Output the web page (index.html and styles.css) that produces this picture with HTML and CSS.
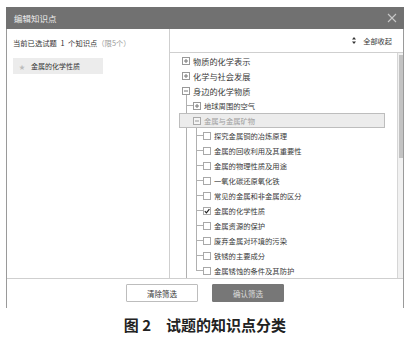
FILE: index.html
```html
<!DOCTYPE html>
<html lang="zh-CN">
<head>
    <meta charset="UTF-8">
    <title>编辑知识点</title>
    <link rel="stylesheet" href="styles.css">
</head>
<body>
    <div class="dialog">
        <div class="dlg-head">
            <span class="dlg-title">编辑知识点</span>
            <svg class="close" width="10" height="10" viewBox="0 0 10 10">
                <path d="M1 1L9 9M9 1L1 9" stroke="#c8c8c8" stroke-width="1.1" fill="none"/>
            </svg>
        </div>
        <div class="dlg-body">
            <div class="left">
                <p class="picked">当前已选试题 <b>1</b> 个知识点<span class="limit">（限5个）</span></p>
                <div class="tag"><span class="star">★</span>金属的化学性质</div>
            </div>
            <div class="right">
                <div class="toolbar">
                    <svg class="sort" width="4" height="7" viewBox="0 0 4 7">
                        <path d="M2 0L4 2.6H0Z M2 7L4 4.4H0Z" fill="#333"/>
                    </svg>
                    全部收起
                </div>
                <div class="tree-wrap">
                    <ul class="tree">
                        <li class="top">
                            <svg class="tgl" width="8" height="8" viewBox="0 0 8 8"><rect x=".5" y=".5" width="7" height="7" fill="#fff" stroke="#999"/><path d="M2 4h4M4 2v4" stroke="#777"/></svg>
                            <span>物质的化学表示</span>
                        </li>
                        <li class="top">
                            <svg class="tgl" width="8" height="8" viewBox="0 0 8 8"><rect x=".5" y=".5" width="7" height="7" fill="#fff" stroke="#999"/><path d="M2 4h4M4 2v4" stroke="#777"/></svg>
                            <span>化学与社会发展</span>
                        </li>
                        <li class="top open">
                            <svg class="tgl" width="8" height="8" viewBox="0 0 8 8"><rect x=".5" y=".5" width="7" height="7" fill="#fff" stroke="#999"/><path d="M2 4h4" stroke="#777"/></svg>
                            <span>身边的化学物质</span>
                        </li>
                        <li>
                            <span class="branch"></span>
                            <svg class="tgl" width="8" height="8" viewBox="0 0 8 8"><rect x=".5" y=".5" width="7" height="7" fill="#fff" stroke="#999"/><path d="M2 4h4M4 2v4" stroke="#777"/></svg>
                            <span>地球周围的空气</span>
                        </li>
                        <li class="current">
                            <svg class="tgl" width="8" height="8" viewBox="0 0 8 8"><rect x=".5" y=".5" width="7" height="7" fill="#f4f4f4" stroke="#aaa"/><path d="M2 4h4" stroke="#999"/></svg>
                            <span>金属与金属矿物</span>
                        </li>
                        <li class="leaf">
                            <span class="pass"></span><span class="elbow"></span><i class="chk"></i>
                            <span>探究金属铜的冶炼原理</span>
                        </li>
                        <li class="leaf">
                            <span class="pass"></span><span class="elbow"></span><i class="chk"></i>
                            <span>金属的回收利用及其重要性</span>
                        </li>
                        <li class="leaf">
                            <span class="pass"></span><span class="elbow"></span><i class="chk"></i>
                            <span>金属的物理性质及用途</span>
                        </li>
                        <li class="leaf">
                            <span class="pass"></span><span class="elbow"></span><i class="chk"></i>
                            <span>一氧化碳还原氧化铁</span>
                        </li>
                        <li class="leaf">
                            <span class="pass"></span><span class="elbow"></span><i class="chk"></i>
                            <span>常见的金属和非金属的区分</span>
                        </li>
                        <li class="leaf">
                            <span class="pass"></span><span class="elbow"></span>
                            <svg class="chk-on" width="8" height="8" viewBox="0 0 8 8"><rect x=".5" y=".5" width="7" height="7" fill="#fff" stroke="#aaa"/><path d="M1.8 4.2L3.4 5.8L6.4 2.2" stroke="#222" stroke-width="1.2" fill="none"/></svg>
                            <span>金属的化学性质</span>
                        </li>
                        <li class="leaf">
                            <span class="pass"></span><span class="elbow"></span><i class="chk"></i>
                            <span>金属资源的保护</span>
                        </li>
                        <li class="leaf">
                            <span class="pass"></span><span class="elbow"></span><i class="chk"></i>
                            <span>废弃金属对环境的污染</span>
                        </li>
                        <li class="leaf">
                            <span class="pass"></span><span class="elbow"></span><i class="chk"></i>
                            <span>铁锈的主要成分</span>
                        </li>
                        <li class="leaf">
                            <span class="pass"></span><span class="elbow last"></span><i class="chk"></i>
                            <span>金属锈蚀的条件及其防护</span>
                        </li>
                    </ul>
                    <div class="scrollbar"><div class="thumb"></div></div>
                </div>
            </div>
        </div>
        <div class="dlg-foot">
            <button class="btn">清除筛选</button>
            <button class="btn btn-dark">确认筛选</button>
        </div>
    </div>
    <p class="caption">图 2　试题的知识点分类</p>
</body>
</html>
```

FILE: styles.css
```css
body {
    margin: 0;
    width: 410px;
    background: #fff;
    font-family: "Noto Sans CJK SC", "Noto Sans", sans-serif;
    color: #444;
}
.dialog {
    margin: 7px 0 0 6px;
    width: 396px;
    border-left: 1px solid #9a9a9a;
    border-right: 1px solid #9a9a9a;
}
.dlg-head {
    height: 22px;
    margin: 0 -1px;
    padding: 0 7px 0 8px;
    background: #717171;
    display: flex;
    align-items: center;
    justify-content: space-between;
}
.dlg-title {
    color: #eee;
    font-size: 8.5px;
}
.dlg-body {
    display: flex;
    height: 249px;
}
.left {
    width: 163px;
    border-right: 1px solid #cfcfcf;
    padding: 0 6px;
    box-sizing: border-box;
}
.picked {
    margin: 7px 0 0;
    line-height: 15px;
    font-size: 7.3px;
    color: #333;
}
.picked b {
    font-weight: normal;
    padding: 0 2px;
}
.limit {
    color: #9a9a9a;
}
.tag {
    margin-top: 7px;
    width: 90px;
    height: 16px;
    background: #ececec;
    font-size: 7px;
    color: #333;
    display: flex;
    align-items: center;
}
.star {
    color: #bcbcbc;
    font-size: 6px;
    margin: 0 6px 0 6px;
}
.right {
    flex: 1;
    display: flex;
    flex-direction: column;
}
.toolbar {
    height: 23px;
    border-bottom: 1px solid #cfcfcf;
    display: flex;
    align-items: center;
    justify-content: flex-end;
    padding-right: 11px;
    font-size: 7.2px;
    color: #333;
}
.sort {
    margin-right: 7px;
}
.tree-wrap {
    flex: 1;
    display: flex;
    overflow: hidden;
}
.tree {
    flex: 1;
    margin: 0;
    padding: 0;
    list-style: none;
    overflow: hidden;
    font-size: 7.3px;
    color: #3a3a3a;
}
.tree li {
    display: flex;
    align-items: center;
    height: 15px;
    padding-left: 12px;
    white-space: nowrap;
}
.tree li.top {
    font-size: 8.2px;
}
.tgl {
    flex: none;
    margin-right: 3px;
}
.open {
    background: linear-gradient(#b0b0b0, #b0b0b0) 16px 11px / 1px 4px no-repeat;
}
.branch,
.pass,
.elbow {
    align-self: stretch;
    flex: none;
}
.branch {
    width: 11px;
    background:
        linear-gradient(#b0b0b0, #b0b0b0) 4px 0 / 1px 100% no-repeat,
        linear-gradient(#b0b0b0, #b0b0b0) 4px 7px / 7px 1px no-repeat;
}
.pass {
    width: 10px;
    background: linear-gradient(#b0b0b0, #b0b0b0) 4px 0 / 1px 100% no-repeat;
}
.elbow {
    width: 11px;
    background:
        linear-gradient(#b0b0b0, #b0b0b0) 4px 0 / 1px 100% no-repeat,
        linear-gradient(#b0b0b0, #b0b0b0) 4px 7px / 7px 1px no-repeat;
}
.elbow.last {
    background:
        linear-gradient(#b0b0b0, #b0b0b0) 4px 0 / 1px 8px no-repeat,
        linear-gradient(#b0b0b0, #b0b0b0) 4px 7px / 7px 1px no-repeat;
}
.chk {
    flex: none;
    width: 6px;
    height: 6px;
    border: 1px solid #a8a8a8;
    background: #fff;
    margin-right: 3px;
}
.chk-on {
    flex: none;
    margin-right: 3px;
}
.tree li.current {
    margin-left: 9px;
    width: 206px;
    box-sizing: border-box;
    padding-left: 13px;
    border: 1px solid #bdbdbd;
    background: #ececec;
    color: #a0a0a0;
    font-size: 7.3px;
}
.scrollbar {
    width: 5px;
    border-left: 1px solid #d6d6d6;
    background: #f1f1f1;
    padding-top: 2px;
}
.thumb {
    height: 103px;
    margin-left: 1px;
    background: #c3c3c3;
}
.dlg-foot {
    border-top: 1px solid #cfcfcf;
    display: flex;
    justify-content: center;
    gap: 14px;
    padding-top: 5px;
    height: 24px;
}
.btn {
    width: 72px;
    height: 18px;
    padding: 0;
    font-family: inherit;
    font-size: 7.5px;
    border: 1px solid #bdbdbd;
    background: #fff;
    color: #333;
    border-radius: 1px;
}
.btn-dark {
    background: #777;
    border-color: #777;
    color: #ddd;
}
.caption {
    margin: 7px 0 0;
    text-align: center;
    font-size: 15px;
    font-weight: bold;
    color: #222;
    line-height: 20px;
}
```
